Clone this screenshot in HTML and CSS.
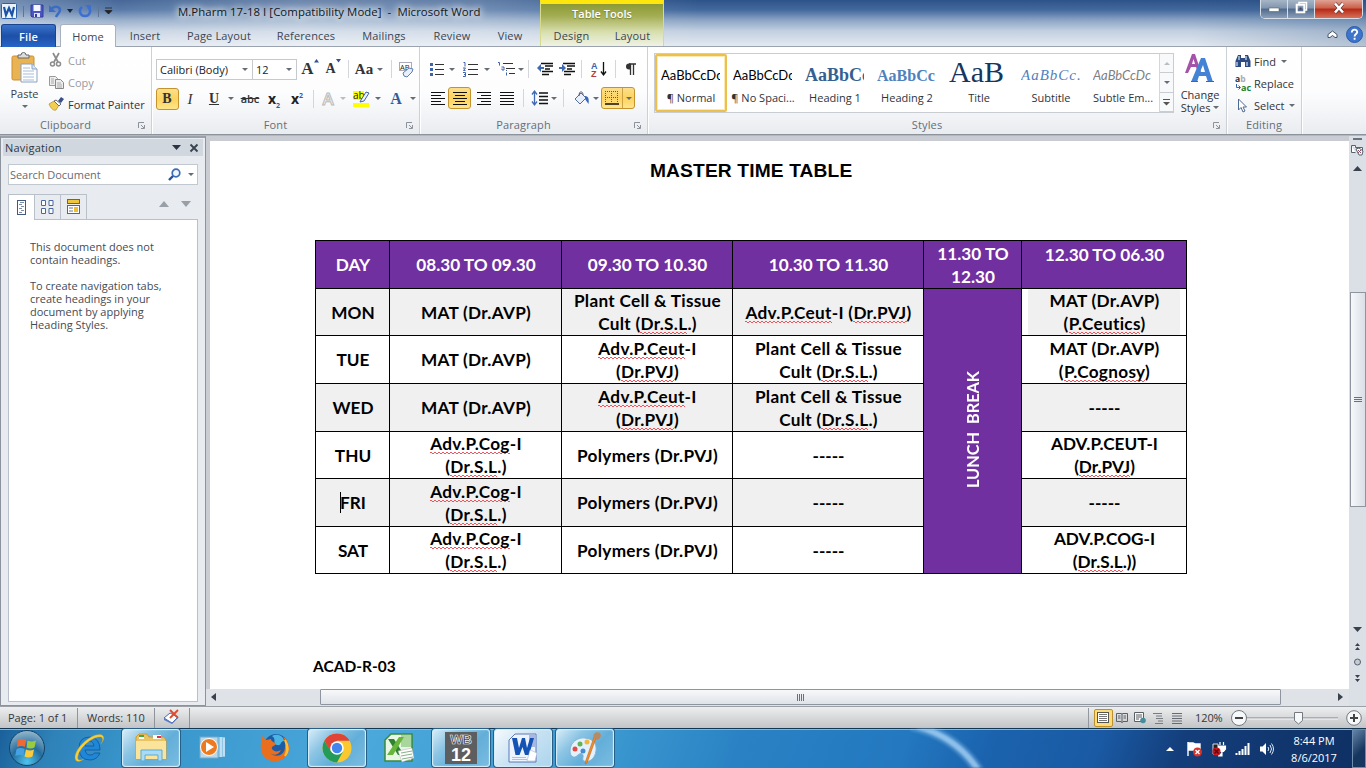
FILE: index.html
```html
<!DOCTYPE html>
<html lang="en">
<head>
<meta charset="utf-8">
<title>M.Pharm 17-18 I [Compatibility Mode] - Microsoft Word</title>
<link rel="stylesheet" href="styles.css">
</head>
<body>
<div class="screen">
  <header class="top">
    <div class="top-left">
      <div class="titlebar">
        <div class="quick">
          <svg width="16" height="18" viewBox="0 0 16 18"><rect x=".5" y="1.500" width="15" height="15" rx="1" fill="#eaf2fc" stroke="#2d5fa8"/><path d="M3 5l2 8 3-7 3 7 2-8" fill="none" stroke="#1b53a6" stroke-width="2.200"/></svg>
          <i class="qsep"></i>
          <svg width="14" height="14" viewBox="0 0 14 14"><path d="M1 1h12v12H2l-1-1z" fill="#4a55c4" stroke="#353d9c"/><rect x="3.500" y="1" width="7" height="6" fill="#f5f7ff"/><rect x="4" y="9" width="6" height="4" fill="#dfe3f5"/><rect x="5" y="10" width="2" height="3" fill="#353d9c"/></svg>
          <svg width="13" height="14" viewBox="0 0 13 14"><path d="M2 5c4-4 9-2 9 1 0 3-3 4-4 7" fill="none" stroke="#3d6cc4" stroke-width="2.500"/><path d="M0 1v7h7z" fill="#3d6cc4"/></svg>
          <i class="arr dark"></i>
          <svg width="14" height="14" viewBox="0 0 14 14"><path d="M4 3C0 6 2 12 7 12s7-6 3-9" fill="none" stroke="#3d6fd0" stroke-width="2.500"/><path d="M7 1h6v6z" fill="#3d6fd0"/></svg>
          <i class="qsep"></i>
          <svg width="7" height="8" viewBox="0 0 7 8"><path d="M0 1h7M0 3.500h7L3.500 7z" stroke="#222" fill="#222" stroke-width=".8"/></svg>
        </div>
        <div class="title">M.Pharm 17-18 I [Compatibility Mode]&nbsp; -&nbsp; Microsoft Word</div>
      </div>
      <nav class="tabs">
        <span class="tab file">File</span><span class="tab home">Home</span><span class="tab">Insert</span><span class="tab">Page Layout</span><span class="tab">References</span><span class="tab">Mailings</span><span class="tab">Review</span><span class="tab">View</span>
      </nav>
    </div>
    <div class="context">
      <div class="context-title">Table Tools</div>
      <div class="context-tabs"><span class="tab">Design</span><span class="tab">Layout</span></div>
    </div>
    <div class="top-right">
      <div class="winbtns">
        <span class="wb min"><svg width="12" height="12" viewBox="0 0 12 12"><rect x="1" y="6" width="10" height="3.500" fill="#fff" stroke="#566" stroke-width=".6"/></svg></span>
        <span class="wb max"><svg width="13" height="13" viewBox="0 0 13 13"><path d="M4 3V1.500h7.500V9H10" fill="none" stroke="#fff" stroke-width="1.500"/><rect x="1.700" y="3.700" width="7.600" height="7.600" fill="none" stroke="#fff" stroke-width="2"/><rect x="4.500" y="6.500" width="2" height="2" fill="#445"/></svg></span>
        <span class="wb close"><svg width="12" height="12" viewBox="0 0 12 12"><path d="M2 1.500l8 9M10 1.500l-8 9" stroke="#5b2e2e" stroke-width="3.600"/><path d="M2 1.500l8 9M10 1.500l-8 9" stroke="#fff" stroke-width="2.600"/></svg></span>
      </div>
      <div class="helpers">
        <svg width="11" height="9" viewBox="0 0 11 9"><path d="M1 4.500L5.500 1 10 4.500v3H8L5.500 5.500 3 7.500H1z" fill="#fff" stroke="#445469"/></svg>
        <svg width="17" height="17" viewBox="0 0 17 17"><circle cx="8.500" cy="8.500" r="8" fill="#3e74cb" stroke="#2b5bab"/><path d="M5.800 6.500c0-4 5.800-3.500 5.400-.3C11 8 8.600 8 8.600 10.400M8.600 11.700v2" fill="none" stroke="#fff" stroke-width="1.900"/></svg>
      </div>
    </div>
  </header>

  <section class="ribbon">
    <div class="group clip">
      <div class="body clip-body">
        <div class="paste">
          <svg width="27" height="31" viewBox="0 0 27 31"><rect x="1" y="4" width="22" height="24" rx="1.500" fill="#e9b252" stroke="#c98f34"/><path d="M7 6V3h3a2.500 2.500 0 0 1 5 0h3v3z" fill="#ddd" stroke="#666"/><path d="M10 12h11l5 5v13H10z" fill="#fdfeff" stroke="#8aa0bf"/><path d="M21 12v5h5" fill="#dce6f3" stroke="#8aa0bf"/><path d="M12 16h7M12 19h11M12 22h11M12 25h11M12 28h11" stroke="#a9bcd8"/></svg>
          <span>Paste</span><i class="arr"></i>
        </div>
        <div class="clip-list">
          <div class="cmd off"><svg width="15" height="14" viewBox="0 0 15 14"><path d="M4 0l5 9M10 0L5 9" stroke="#8c8c8c" stroke-width="1.700"/><circle cx="3.500" cy="11" r="2" fill="none" stroke="#8c8c8c" stroke-width="1.500"/><circle cx="9.500" cy="11" r="2" fill="none" stroke="#8c8c8c" stroke-width="1.500"/></svg><span>Cut</span></div>
          <div class="cmd off"><svg width="15" height="13" viewBox="0 0 15 13"><path d="M.5.5h6l2 2v7h-8z" fill="#eee" stroke="#999"/><path d="M6.500 3.500h5l3 3v6h-8z" fill="#eee" stroke="#888"/><path d="M2 3h3M2 5h3M2 7h3M8 7h4M8 9h5M8 11h5" stroke="#aaa"/></svg><span>Copy</span></div>
          <div class="cmd"><svg width="15" height="14" viewBox="0 0 15 14"><path d="M0 7l5-3 5 4-3 5c-2 1-5-1-7-6z" fill="#f1ce4f" stroke="#b08a24" stroke-width=".7"/><path d="M5 4l2-1 5 4-2 2z" fill="#fff" stroke="#667"/><path d="M9 4l3-4 3 2-3 4z" fill="#3b4f87"/></svg><span>Format Painter</span></div>
        </div>
      </div>
      <div class="label"><span>Clipboard</span><svg class="launch" viewBox="0 0 7 7"><path d="M.5 6V.5H6M3 3l3 3M6.500 3v3.500H3" fill="none" stroke="#8c929a"/></svg></div>
    </div>

    <div class="group font">
      <div class="body">
        <div class="row font1">
          <span class="combo name"><b>Calibri (Body)</b><i class="arr"></i></span>
          <span class="combo size"><b>12</b><i class="arr"></i></span>
          <span class="serif big">A<svg width="5" height="4" viewBox="0 0 5 4"><path d="M0 3.500L2.500 0 5 3.500z" fill="#2e5394"/></svg></span>
          <span class="serif mid">A<svg width="5" height="4" viewBox="0 0 5 4"><path d="M0 0h5L2.500 3.500z" fill="#2e5394"/></svg></span>
          <i class="sep"></i>
          <span class="serif aa">Aa</span><i class="arr"></i><i class="sep"></i>
          <svg width="17" height="17" viewBox="0 0 17 17"><rect x="1.500" y="1.500" width="12" height="8" fill="#fff" stroke="#aab"/><text x="2" y="8.500" font-size="7.500" class="tiny">AB</text><path d="M5 12l6-5 4 1-1 3-5 5-3-1z" fill="#e9f0fb" stroke="#5c7fb8"/></svg>
        </div>
        <div class="row font2">
          <span class="hot"><b class="serif bold">B</b></span>
          <span class="serif ital">I</span><span class="serif under">U</span><i class="arr"></i>
          <span class="strike">abc</span><span class="x2">x<sub>2</sub></span><span class="x2">x<sup>2</sup></span><i class="sep"></i>
          <span class="ghost">A</span><i class="arr pale"></i>
          <svg width="17" height="18" viewBox="0 0 17 18"><rect x="0" y="1" width="11" height="9" fill="#ff0"/><text x="0" y="9" font-size="10" class="tiny">ab</text><path d="M8 10l5-8 3 1-5 8-4 1z" fill="#eef4ff" stroke="#3d64a7"/><rect x="0" y="13" width="16" height="4" fill="#ff0"/></svg><i class="arr"></i>
          <span class="serif fcolor">A</span><i class="arr"></i>
        </div>
      </div>
      <div class="label"><span>Font</span><svg class="launch" viewBox="0 0 7 7"><path d="M.5 6V.5H6M3 3l3 3M6.500 3v3.500H3" fill="none" stroke="#8c929a"/></svg></div>
    </div>

    <div class="group para">
      <div class="body">
        <div class="row para1">
          <svg width="14" height="14" viewBox="0 0 14 14"><path d="M5 2.500h9M5 7.500h9M5 12.500h9" stroke="#333"/><path d="M0 1h3v3H0zM0 6h3v3H0zM0 11h3v3H0z" fill="#3f63a8"/></svg><i class="arr"></i>
          <svg width="15" height="15" viewBox="0 0 15 15"><path d="M5 2.500h10M5 7.500h10M5 12.500h10" stroke="#333"/><path d="M.5.500H2v4M0 6h2.500L.5 8.500h2M0 10.500h2.500v4H0M1 12.500h1" fill="none" stroke="#3f63a8"/></svg><i class="arr"></i>
          <svg width="17" height="16" viewBox="0 0 17 16"><path d="M5 2.500h10M8 7.500h9M11 12.500h6" stroke="#333"/><path d="M0 1.500h1.500v3M3.500 6H6v3H4V7.500M8.500 11.500v3M8.500 9v1" fill="none" stroke="#3f63a8"/></svg><i class="arr"></i>
          <i class="sep"></i>
          <svg width="16" height="14" viewBox="0 0 16 14"><path d="M4 1.500h12M8 4h8M8 7h5M5 9.500h11M5 12.500h7" stroke="#111" stroke-width="1.500"/><path d="M0 6l4-4v3h3v2H4v3z" fill="#3f68b5"/></svg>
          <svg width="16" height="14" viewBox="0 0 16 14"><path d="M4 1.500h12M8 4h8M8 7h5M5 9.500h11M5 12.500h7" stroke="#111" stroke-width="1.500"/><path d="M7 6L3 2v3H0v2h3v3z" fill="#3f68b5"/></svg>
          <i class="sep"></i>
          <svg width="17" height="16" viewBox="0 0 17 16"><text x="1" y="7.500" font-size="9" class="az-a">A</text><text x="1" y="15.500" font-size="9" class="az-z">Z</text><path d="M13.500 1v12M11 10.500l2.500 3.500 2.500-3.500" fill="none" stroke="#111" stroke-width="1.300"/></svg>
          <i class="sep"></i>
          <svg width="11" height="13" viewBox="0 0 11 13"><path d="M5.500 1v11M8.500 1v11M4 1h7" stroke="#333" stroke-width="1.300"/><path d="M5.500.5H4a3 3 0 0 0 0 6h1.500z" fill="#333"/></svg>
        </div>
        <div class="row para2">
          <svg width="14" height="13" viewBox="0 0 14 13"><path d="M0 .5h14M0 3.500h10M0 6.500h14M0 9.500h10M0 12.500h14" stroke="#111"/></svg>
          <span class="hot"><svg width="14" height="13" viewBox="0 0 14 13"><path d="M0 .5h14M2 3.500h10M0 6.500h14M2 9.500h10M0 12.500h14" stroke="#111"/></svg></span>
          <svg width="14" height="13" viewBox="0 0 14 13"><path d="M0 .5h14M4 3.500h10M0 6.500h14M4 9.500h10M0 12.500h14" stroke="#111"/></svg>
          <svg width="14" height="13" viewBox="0 0 14 13"><path d="M0 .5h14M0 3.500h14M0 6.500h14M0 9.500h14M0 12.500h14" stroke="#111"/></svg>
          <i class="sep"></i>
          <svg width="16" height="16" viewBox="0 0 16 16"><path d="M7 3h9M7 6.500h9M7 10h9M7 13.500h9" stroke="#111" stroke-width="1.300"/><path d="M2.500 2v12M0 4.500L2.500 1 5 4.500M0 11.500L2.500 15 5 11.500" fill="none" stroke="#3f68b5" stroke-width="1.300"/></svg><i class="arr"></i>
          <i class="sep"></i>
          <svg width="16" height="14" viewBox="0 0 16 14"><path d="M1 8l6-6 5 5-6 6z" fill="#e8f0fb" stroke="#556f9d"/><path d="M5 5c0-6 4-5 4-1" fill="none" stroke="#556"/><path d="M11 5c4 0 4 4 3.500 8L11 8z" fill="#3668bd"/></svg><i class="arr"></i>
          <span class="hot split"><svg width="14" height="14" viewBox="0 0 14 14"><path d="M0 .5h13M0 6.500h13M.5 0v12M6.500 0v12M12.500 0v12" stroke="#6b5b2b" stroke-dasharray="1 1"/><path d="M0 13h14" stroke="#111" stroke-width="1.500"/></svg><em></em><i class="arr"></i></span>
        </div>
      </div>
      <div class="label"><span>Paragraph</span><svg class="launch" viewBox="0 0 7 7"><path d="M.5 6V.5H6M3 3l3 3M6.500 3v3.500H3" fill="none" stroke="#8c929a"/></svg></div>
    </div>

    <div class="group styles">
      <div class="body styles-body">
        <div class="gallery">
          <div class="style on"><div class="sample">AaBbCcDc</div><span>¶ Normal</span></div>
          <div class="style"><div class="sample">AaBbCcDc</div><span>¶ No Spaci...</span></div>
          <div class="style"><div class="sample h1">AaBbCc</div><span>Heading 1</span></div>
          <div class="style"><div class="sample h2">AaBbCc</div><span>Heading 2</span></div>
          <div class="style"><div class="sample ti">AaB</div><span>Title</span></div>
          <div class="style"><div class="sample su">AaBbCc.</div><span>Subtitle</span></div>
          <div class="style"><div class="sample se">AaBbCcDc</div><span>Subtle Em...</span></div>
          <div class="gscroll"><span><i class="arr up pale"></i></span><span><i class="arr"></i></span><span><svg width="7" height="7" viewBox="0 0 7 7"><path d="M0 .5h7" stroke="#555"/><path d="M0 3h7L3.500 6.500z" fill="#555"/></svg></span></div>
        </div>
        <div class="change">
          <svg width="30" height="30" viewBox="0 0 30 30"><path d="M1 20L8 1h3l6 18h-3l-2-5H7l-3 6zM8 11h3L9.500 6z" fill="#a453a8"/><path d="M7 29L17 5h4l8 24h-5l-2-6h-7l-2 6zM16 19h5l-2-7z" fill="#4382d4"/><path d="M7 28.500h7M22 28.500h8" stroke="#3568b4"/></svg>
          <span>Change</span><span>Styles <i class="arr"></i></span>
        </div>
      </div>
      <div class="label"><span>Styles</span><svg class="launch" viewBox="0 0 7 7"><path d="M.5 6V.5H6M3 3l3 3M6.500 3v3.500H3" fill="none" stroke="#8c929a"/></svg></div>
    </div>

    <div class="group edit">
      <div class="body edit-body">
        <div class="cmd"><svg width="16" height="14" viewBox="0 0 16 14"><path d="M3 1h3v3h4V1h3l2.500 6v6H10V8H6v5H.5V7z" fill="#2c4a80"/><path d="M2 8v4M12 8v4M4 2v4M11 2v4" stroke="#c4d5f0" stroke-width="1.300"/></svg><span>Find</span><i class="arr"></i></div>
        <div class="cmd"><svg width="16" height="15" viewBox="0 0 16 15"><text x="0" y="6" font-size="8.500" class="abk">a<tspan fill="#aaa">b</tspan></text><text x="6" y="14.500" font-size="9" class="acg">ac</text><path d="M1.500 8v3.500H5M3.500 9.500l2 2-2 2" fill="none" stroke="#3763aa"/></svg><span>Replace</span></div>
        <div class="cmd"><svg width="16" height="15" viewBox="0 0 16 15"><path d="M3.500 1v11l2.500-2.500L8 14l2-1-2-4h3.500z" fill="#fff" stroke="#4e6a94"/></svg><span>Select</span><i class="arr"></i></div>
      </div>
      <div class="label"><span>Editing</span></div>
    </div>
  </section>

  <main class="work">
    <aside class="nav">
      <div class="nav-head"><span>Navigation</span><svg width="9" height="5" viewBox="0 0 9 5"><path d="M0 0h9L4.500 5z" fill="#2a3442"/></svg><svg width="8" height="8" viewBox="0 0 8 8"><path d="M.5.500l7 7M7.500.500l-7 7" stroke="#3a4350" stroke-width="1.900"/></svg></div>
      <div class="search"><span>Search Document</span><svg width="13" height="13" viewBox="0 0 13 13"><circle cx="8" cy="5" r="3.800" fill="#eef6ff" stroke="#3d6cb4" stroke-width="1.700"/><path d="M5 8l-4 4" stroke="#24509b" stroke-width="2.400"/></svg><i class="arr"></i></div>
      <div class="nav-tabs">
        <span class="on"><svg width="9" height="15" viewBox="0 0 9 15"><rect x=".5" y=".5" width="8" height="14" fill="#fff" stroke="#41597e"/><path d="M3 2.500h4M2 4.500h3M4 6.500h3M2 8.500h3M4 10.500h3M2 12.500h3" stroke="#5a7093" stroke-width=".8"/></svg></span>
        <span><svg width="13" height="14" viewBox="0 0 13 14"><path d="M.5.500h4v5h-4zM8 .5h4v5H8zM.5 8.500h4v5h-4zM8 8.500h4v5H8z" fill="#fff" stroke="#48699e"/></svg></span>
        <span><svg width="13" height="15" viewBox="0 0 13 15"><rect x=".5" y=".5" width="12" height="4" fill="#f0c63d" stroke="#5e6670"/><rect x=".5" y="6.500" width="12" height="8" fill="#fff" stroke="#5e6670"/><path d="M2 9h4M2 12h4" stroke="#68788c"/><path d="M7 8h4v5H7z" fill="#efbd2e"/></svg></span>
        <svg class="pv" width="10" height="6" viewBox="0 0 10 6"><path d="M0 6L5 0l5 6z" fill="#999fa6"/></svg>
        <svg class="nx" width="10" height="6" viewBox="0 0 10 6"><path d="M0 0h10L5 6z" fill="#999fa6"/></svg>
      </div>
      <div class="nav-body">
        <p>This document does not<br>contain headings.</p>
        <p>To create navigation tabs,<br>create headings in your<br>document by applying<br>Heading Styles.</p>
      </div>
    </aside>
    <section class="doc">
      <div class="page">
        <h1>MASTER TIME TABLE</h1>
        <div class="table">
          <div class="th">DAY</div><div class="th">08.30 TO 09.30</div><div class="th">09.30 TO 10.30</div><div class="th">10.30 TO 11.30</div><div class="th">11.30 TO<br>12.30</div><div class="th topline">12.30 TO 06.30</div>
          <div class="g">MON</div><div class="g w">MAT (Dr.AVP)</div><div class="g w">Plant Cell &amp; Tissue<br>Cult (<u>Dr.S.L</u>.)</div><div class="g w"><span><u>Adv.P.Ceut</u>-I (<u>Dr.PVJ</u>)</span></div><div class="th lunch"><span>LUNCH&nbsp; BREAK</span></div><div class="inner w">MAT (Dr.AVP)<br>(<u>P.Ceutics</u>)</div>
          <div>TUE</div><div class="w">MAT (Dr.AVP)</div><div class="w"><u>Adv.P.Ceut</u>-I<br>(<u>Dr.PVJ</u>)</div><div class="w">Plant Cell &amp; Tissue<br>Cult (<u>Dr.S.L</u>.)</div><div class="w">MAT (Dr.AVP)<br>(<u>P.Cognosy</u>)</div>
          <div class="g">WED</div><div class="g w">MAT (Dr.AVP)</div><div class="g w"><u>Adv.P.Ceut</u>-I<br>(<u>Dr.PVJ</u>)</div><div class="g w">Plant Cell &amp; Tissue<br>Cult (<u>Dr.S.L</u>.)</div><div class="g">-----</div>
          <div>THU</div><div class="w"><u>Adv.P.Cog</u>-I<br>(<u>Dr.S.L</u>.)</div><div class="w">Polymers (Dr.PVJ)</div><div>-----</div><div>ADV.P.CEUT-I<br>(<u>Dr.PVJ</u>)</div>
          <div class="g"><span class="caret">FRI</span></div><div class="g w"><u>Adv.P.Cog</u>-I<br>(<u>Dr.S.L</u>.)</div><div class="g w">Polymers (Dr.PVJ)</div><div class="g">-----</div><div class="g">-----</div>
          <div>SAT</div><div class="w"><u>Adv.P.Cog</u>-I<br>(<u>Dr.S.L</u>.)</div><div class="w">Polymers (Dr.PVJ)</div><div>-----</div><div>ADV.P.COG-I<br>(<u>Dr.S.L</u>.))</div>
        </div>
        <div class="foot">ACAD-R-03</div>
      </div>
      <div class="hscroll"><svg width="14" height="8" viewBox="0 0 14 8"><path d="M10 0v8L5 4z" fill="#39414c"/></svg><div class="hthumb"><i></i><i></i><i></i><i></i></div><svg class="hr" width="8" height="8" viewBox="0 0 8 8"><path d="M1 0v8l5-4z" fill="#39414c"/></svg></div>
    </section>
    <div class="vscroll">
      <i class="splitbar"></i>
      <svg class="ruler" width="13" height="12" viewBox="0 0 13 12"><path d="M.5 1.500h4v2h7v4M.5 1.500v7h4" fill="#fff" stroke="#566270"/><path d="M5 5l3-1 4 3-1 4H8z" fill="#fff" stroke="#566270"/><path d="M7 6l3 3M10 6L7 9" stroke="#8b5360"/></svg>
      <svg class="vu" width="9" height="5" viewBox="0 0 9 5"><path d="M0 5L4.500 0 9 5z" fill="#39414c"/></svg>
      <div class="vthumb"><i></i><i></i><i></i></div>
      <svg class="vd" width="9" height="5" viewBox="0 0 9 5"><path d="M0 0h9L4.500 5z" fill="#39414c"/></svg>
      <svg class="browse" width="9" height="40" viewBox="0 0 9 40"><path d="M2 4h5L4.500 1zM2 8h5L4.500 5z" fill="#39414c"/><circle cx="4.500" cy="20" r="3" fill="#c5cad1" stroke="#555f6b"/><path d="M2 33h5L4.500 36zM2 37h5L4.500 40z" fill="#39414c"/></svg>
    </div>
  </main>

  <footer class="status">
    <span class="s-page">Page: 1 of 1</span><span class="s-words">Words: 110</span>
    <span class="s-proof"><svg width="17" height="16" viewBox="0 0 17 16"><path d="M1 9l6-5 8 4-6 6z" fill="#fff" stroke="#4b6bb0"/><path d="M1 9v2l8 4 6-6V8l-6 6z" fill="#557bc4"/><path d="M7 1l8 8M15 1L7 9" stroke="#e04a2c" stroke-width="1.800"/></svg></span>
    <span class="grow"></span><i class="s-sep"></i>
    <span class="view-on"><svg width="12" height="11" viewBox="0 0 12 11"><rect x=".5" y=".5" width="11" height="10" fill="#fff" stroke="#555"/><path d="M2 2.500h8M2 4.500h8M2 6.500h8M2 8.500h8" stroke="#777"/></svg></span>
    <svg width="12" height="12" viewBox="0 0 12 12"><path d="M.5 1.500H5L6 2l1-.5h4.500v8H7l-1 1-1-1H.5zM6 2v9M2 4h2.500M2 6h2.500M7.500 4H10M7.500 6H10" fill="none" stroke="#5a5f66"/></svg>
    <svg width="12" height="12" viewBox="0 0 12 12"><path d="M.5.500h9v9h-9zM2 3h6M2 5h6M2 7h3" fill="#f8f8f8" stroke="#5a5f66"/><circle cx="9" cy="8.500" r="2.800" fill="#478c9b"/></svg>
    <svg width="12" height="12" viewBox="0 0 12 12"><path d="M0 1.500h9M3 4h6M3 6.500h7M5 9h5M2 11.500h8" stroke="#777c83"/></svg>
    <svg width="12" height="12" viewBox="0 0 12 12"><path d="M1 1.500h10M1 4h10M1 6.500h10M1 9h10M1 11.500h10" stroke="#666b73"/></svg>
    <span class="zoom">120%</span>
    <svg class="slider" width="116" height="18" viewBox="0 0 116 18"><path d="M16 9h92" stroke="#7f858d"/><path d="M16 10h92" stroke="#f4f5f7"/><circle cx="9" cy="9" r="7.500" fill="#f7f8f9" stroke="#74797f"/><path d="M5 9h8" stroke="#444" stroke-width="2"/><path d="M64.500 3.500h8v8l-4 3.500-4-3.500z" fill="#f7f8f9" stroke="#74797f"/></svg>
    <svg class="plus" width="16" height="16" viewBox="0 0 16 16"><circle cx="8" cy="8" r="7.300" fill="#f7f8f9" stroke="#74797f"/><path d="M4 8h8M8 4v8" stroke="#444" stroke-width="2"/></svg>
  </footer>

  <footer class="taskbar">
    <svg class="swoosh" width="160" height="40" viewBox="0 0 160 40"><path d="M32 -4Q78 6 102 44" fill="none" stroke="#8cc4f0" stroke-width="12" opacity=".3"/><path d="M32 -4Q78 6 102 44" fill="none" stroke="#a9d4f7" stroke-width="6" opacity=".75"/></svg>
    <div class="orb"><svg width="38" height="38" viewBox="0 0 38 38"><defs><radialGradient id="orb" cx=".5" cy=".9" r=".9"><stop offset="0" stop-color="#4ec4f0"/><stop offset=".5" stop-color="#246c9c"/><stop offset="1" stop-color="#97b9cf"/></radialGradient></defs><circle cx="19" cy="19" r="17.500" fill="url(#orb)" stroke="#134263"/><path d="M10 11q4-2 8 0l-1 7q-4-2-8 0z" fill="#ee6a35"/><path d="M19.500 11.500q4 2 8.500 0l-1.500 7q-4 2-8 0z" fill="#9acb3c"/><path d="M8.500 20q4-2 8 0l-1.200 7q-4-2-8 0z" fill="#45a2e2"/><path d="M18 20.500q4 2 8 0l-1.500 7q-4 2-8 0z" fill="#fccb3d"/></svg></div>
    <div class="apps">
      <span class="app"><svg width="32" height="32" viewBox="0 0 32 32"><path d="M27 18H12q1 5 5 5 3 0 4.500-2H27q-3 7-10 7Q6 28 6 16 6 5 17 5q10 1 10 13zM12 14h9q-1-5-4.500-5T12 14z" fill="#1f86d8" stroke="#10579d" stroke-width=".8"/><path d="M29 3C20 0 2 15 2 26c1 6 6 3 9 1-5 2-7 1-6-3C7 15 20 4 28 5c3 1 1 5 0 7 3-4 4-7 1-9z" fill="#f6cf3c" stroke="#bd922a" stroke-width=".4"/></svg></span>
      <span class="app run"><svg width="32" height="30" viewBox="0 0 32 30"><path d="M1 4l3-3h8l2 3h15l2 3v19H1z" fill="#eac364" stroke="#c99b36"/><path d="M4 2h5v4H4zM18 2h8v4h-8z" fill="#fffdf0"/><path d="M4 2h5v2H4z" fill="#41a847"/><path d="M22 3h4v2h-4z" fill="#d34"/><path d="M1 8h30v18H1z" fill="#fae39a"/><path d="M6 28V17h21v11h-4v-6H10v6z" fill="#a9dbf4" stroke="#5aa9d5"/></svg></span>
      <span class="app"><svg width="28" height="26" viewBox="0 0 28 26"><path d="M16 2h10v20H16z" fill="#8fc6e6"/><path d="M22 2v20M25 3v18" stroke="#eef8ff"/><rect x="1" y="2" width="18" height="21" fill="#b9d8ea" stroke="#73aacb"/><circle cx="10" cy="12" r="8.500" fill="#ee7a20" stroke="#fff"/><path d="M7 7v10l8-5z" fill="#fff"/></svg></span>
      <span class="app"><svg width="32" height="32" viewBox="0 0 32 32"><circle cx="17" cy="14" r="12" fill="#1d5ca5"/><path d="M13 4c5-3 12 0 12 5-4 0-2 5-7 4s0-6-5-9z" fill="#4cb4e2"/><path d="M3 4l4 4 5-1c0 3 4 3 5 5-1 2-5 2-4 5 2 3 6 3 9 1-2 5-8 6-11 3 5 5 15 3 15-6 1-4 0-7-2-10 6 3 8 12 4 18C20 34 3 30 2 17 1 12 3 10 3 4z" fill="#e96f1e"/><path d="M26 8c3 5 4 11 0 16 3-5 2-11 0-16z" fill="#ffd03f" stroke="#ffbf34" stroke-width="2"/></svg></span>
      <span class="app run"><svg width="30" height="30" viewBox="0 0 30 30"><circle cx="15" cy="15" r="14.500" fill="#fbc92f"/><path d="M15 15l-6 3L2.400 7.800A14.500 14.500 0 0 0 15 29.500l6-11z" fill="#249c59"/><path d="M2.400 7.800A14.500 14.500 0 0 1 27.700 7.800H15L8 17z" fill="#df4437"/><circle cx="15" cy="15" r="6.800" fill="#fff"/><circle cx="15" cy="15" r="5.200" fill="#4285ed"/></svg></span>
      <span class="app"><svg width="30" height="30" viewBox="0 0 30 30"><path d="M7 1h21v27H1V7z" fill="#e9f6e6" stroke="#368b3c" stroke-width="1.500"/><path d="M17 2h10v12H17z" fill="#a8d69c"/><path d="M4 6h6l10 16h-6z" fill="#2c842f"/><path d="M20 4h-5L3 22h6z" fill="#68b53c"/><path d="M14 18l14-3 2 10-12 4z" fill="#fff" stroke="#aaa" stroke-width=".5"/><path d="M17 20l11-2M17 23l11-2M18 26l11-2" stroke="#88b389"/></svg></span>
      <span class="app run"><span class="wbtile"><b>WB</b><strong>12</strong></span></span>
      <span class="app run word"><svg width="30" height="30" viewBox="0 0 30 30"><path d="M7 1h21v28H1V7z" fill="#eef4fe" stroke="#5f78b6"/><path d="M21 2h6v12h-6z" fill="#a7b8e4"/><path d="M4 5h5l2 10 3-10h3l2 10 3-10h4l-5 17h-4l-2.500-8-3 8h-4z" fill="#1452b4"/><path d="M22 17l7 3-2 8h-8z" fill="#fff" stroke="#9aa8cb" stroke-width=".5"/><path d="M4 24.500h14M4 26.500h15" stroke="#b3bfde"/></svg></span>
      <span class="app run"><svg width="32" height="34" viewBox="0 0 32 34"><path d="M1 20C1 11 9 6 16 7c8 1 12 5 11 13-1 7-6 12-12 10-3-2 1-5-2-7s-5 4-9 3c-2-1-3-3-3-6z" fill="#e2f1fb" stroke="#83b5d6"/><circle cx="6" cy="18" r="2.500" fill="#e24b45"/><circle cx="11" cy="13" r="2.500" fill="#62b355"/><circle cx="18" cy="11" r="2.500" fill="#f4b63a"/><circle cx="14" cy="20" r="2.500" fill="#458cd1"/><path d="M27 7l-9 25-2 1 1-4 8-23z" fill="#ee8d2e" stroke="#c3681d" stroke-width=".6"/><path d="M25 7c-2-4 2-7 6-5 2 3 0 6-3 7z" fill="#b88a63"/></svg></span>
    </div>
    <div class="tray">
      <svg width="8" height="4" viewBox="0 0 8 4"><path d="M0 4l4-4 4 4z" fill="#fff"/></svg>
      <svg width="17" height="16" viewBox="0 0 17 16"><path d="M2 1v14M3 2h4l2 1h5v7H9L7 9H3z" fill="#fff" stroke="#fff" stroke-width="1.400"/><circle cx="11.500" cy="11" r="4.500" fill="#d6342b"/><path d="M9.500 9l4 4M13.500 9l-4 4" stroke="#fff" stroke-width="1.400"/></svg>
      <svg width="14" height="16" viewBox="0 0 14 16"><path d="M1 3h5v10H1z" fill="#222" stroke="#ddd"/><path d="M8 1v3M11.500 1v3M6.500 5h7v3l-2 2.500h-3L6.500 8zM10 11v4H6" fill="#fff" stroke="#fff" stroke-width="1.200"/><circle cx="4.500" cy="10.500" r="4" fill="#c91818"/><path d="M2.500 8.500l4 4M6.500 8.500l-4 4" stroke="#501" stroke-width="1.200"/></svg>
      <svg width="15" height="12" viewBox="0 0 15 12"><path d="M1.500 12v-2M4.500 12V8M7.500 12V6M10.500 12V3M13.500 12V0" stroke="#fff" stroke-width="2"/></svg>
      <svg width="15" height="14" viewBox="0 0 15 14"><path d="M1 4.500h2.500L7 1v12L3.500 9.500H1z" fill="#fff"/><path d="M9 5q1.500 2 0 4M11 3q3 4 0 8M12.500 1.500q4 5.500 0 11" fill="none" stroke="#dce9f6"/></svg>
      <div class="clock"><span>8:44 PM</span><span>8/6/2017</span></div>
      <i class="peek"></i>
    </div>
  </footer>
</div>
</body>
</html>
```
FILE: styles.css
```css
* { box-sizing: border-box; }
body { margin: 0; font-family: "Open Sans", "Noto Sans", sans-serif; font-size: 11px; color: #3b3f45; }
svg { display: block; flex: none; overflow: visible; }
i, em { font-style: normal; flex: none; }
.screen { width: 1366px; height: 768px; display: flex; flex-direction: column; overflow: hidden; background: #c9cdd2; white-space: nowrap; }

/* title bar and tabs */
.top { height: 47px; display: flex; background: linear-gradient(90deg, rgba(255,255,255,.35) 0, rgba(255,255,255,.12) 120px, rgba(255,255,255,.3) 300px, rgba(255,255,255,.25) 480px, rgba(255,255,255,0) 700px), linear-gradient(#2d5389 0, #43699d 10px, #8ba4c4 20px, #c3d0e1 31px, #e3e9f0 46px); border-bottom: 1px solid #9aa3af; }
.top-left { width: 540px; }
.titlebar { height: 24px; display: flex; align-items: center; }
.quick { width: 178px; display: flex; align-items: center; gap: 5px; padding: 0 0 2px 1px; height: 24px; }
.qsep { width: 1px; height: 11px; background: #5e7597; margin: 0 1px; }
.title { font-size: 11.4px; letter-spacing: .06px; padding-bottom: 2px; color: #101722; text-shadow: 0 0 6px #fff, 0 0 9px #fff, 0 0 12px rgba(255,255,255,.8); }
.tabs { height: 23px; display: grid; grid-template-columns: 56px 60px 58px 90px 84px 72px 64px 52px; }
.tab { display: flex; align-items: center; justify-content: center; height: 23px; letter-spacing: .15px; color: #3d4552; }
.tab.file { margin: 0 0 0 1px; background: linear-gradient(#3a74cb, #1d4fa7 50%, #2766c8); border: 1px solid #1b4490; border-bottom: 0; border-radius: 3px 3px 0 0; color: #fff; font-weight: 600; }
.tab.home { margin: 0 0 0 4px; background: #fff; border: 1px solid #a8b1bd; border-bottom: 0; border-radius: 3px 3px 0 0; height: 24px; z-index: 1; }
.context { width: 124px; border-top: 4px solid #ffe60c; background: linear-gradient(#8d9a36 0, #a3ad52 12px, #d8dfae 28px, #f1f4e8 43px); border-left: 1px solid #d5da8c; border-right: 1px solid #d5da8c; }
.context-title { height: 20px; line-height: 20px; text-align: center; color: #fff; font-weight: 600; text-shadow: 0 1px 1px #777d3a; }
.context-tabs { display: grid; grid-template-columns: 1fr 1fr; }
.top-right { width: 702px; display: flex; flex-direction: column; align-items: flex-end; background: linear-gradient(100deg, transparent 75%, rgba(40,80,130,.25) 100%); }
.winbtns { height: 19px; margin-right: 3px; display: flex; border: 1px solid #d6dee8; border-top: 0; border-radius: 0 0 5px 5px; overflow: hidden; }
.wb { width: 27px; display: flex; align-items: center; justify-content: center; background: linear-gradient(#a7b5c6 0, #8095af 45%, #506a8c 50%, #8b9fb8); border-right: 1px solid #d6dee8; }
.wb svg { margin-top: -2px; }
.wb.close { width: 47px; border: 0; background: linear-gradient(#dfa294 0, #cc5f4a 45%, #b32a15 50%, #d8705a); }
.helpers { display: flex; align-items: center; gap: 14px; height: 28px; padding: 5px 3px 0 0; }
.helpers svg:first-child { margin-right: -6px; }

/* ribbon */
.ribbon { height: 88px; display: flex; background: linear-gradient(#fff 0, #fdfdfe 45px, #e9ecf0 86px); border-bottom: 1px solid #8d939b; box-shadow: 0 1px 0 #b4b8be; z-index: 1; }
.group { height: 87px; border-right: 1px solid #ccd1d7; box-shadow: 1px 0 #fff; }
.clip { width: 152px; } .font { width: 268px; } .para { width: 228px; } .styles { width: 579px; } .edit { width: 75px; }
.body { height: 69px; }
.label { height: 17px; display: flex; align-items: center; justify-content: center; position: relative; color: #676e78; letter-spacing: .15px; }
.clip .label, .font .label, .para .label, .styles .label { padding-right: 20px; }
.launch { position: absolute; right: 6px; bottom: 4px; width: 7px; height: 7px; }
.arr { width: 0; height: 0; border: 3px solid transparent; border-top-color: #666c74; border-bottom: 0; display: inline-block; justify-self: center; }
.arr.dark { border-top-color: #1d2735; border-width: 4px 3px 0; }
.arr.pale { border-top-color: #b9bdc2; }
.arr.up { transform: rotate(180deg); }
.sep { width: 1px; height: 18px; background: #d3d6da; justify-self: center; }
.clip-body { display: flex; }
.paste { width: 49px; padding-top: 5px; display: flex; flex-direction: column; align-items: center; }
.paste span { margin-top: 3px; }
.paste .arr { margin-top: 4px; }
.clip-list { padding-top: 2px; }
.cmd { height: 22px; display: flex; align-items: center; gap: 4px; color: #30343a; }
.cmd.off { color: #979ba0; }
.row { display: grid; align-items: center; justify-items: center; height: 22px; }
.serif { font-family: "Liberation Serif", serif; font-weight: bold; color: #333; line-height: 20px; }
.font .body { padding: 11px 0 0 4px; }
.font1 { grid-template-columns: 97px 44px 26px 20px 10px 22px 10px 13px 17px; margin-bottom: 7px; }
.combo { width: 97px; height: 21px; border: 1px solid #c6cacf; display: flex; align-items: center; justify-content: space-between; padding: 0 4px 0 3px; background: #fff; color: #222; }
.combo b { font-weight: 400; }
.combo.size { width: 44px; border-left: 0; }
.serif.big, .serif.mid { display: flex; }
.serif.big { font-size: 17px; } .serif.mid { font-size: 14px; } .serif.aa { font-size: 15px; }
.font2 { grid-template-columns: 22px 24px 24px 10px 28px 20px 26px 6px 24px 6px 30px 4px 32px 2px; }
.hot { height: 22px; width: 23px; display: flex; align-items: center; justify-content: center; background: linear-gradient(#fcdf8d, #fdd35e 50%, #ffe58a); border: 1px solid #c4932f; border-radius: 3px; }
.bold { font-size: 14px; } .ital { font-size: 15px; font-style: italic; font-weight: 400; } .under { font-size: 14px; text-decoration: underline; }
.strike { font-weight: 600; font-size: 11px; text-decoration: line-through; color: #333; }
.x2 { font-size: 14px; font-weight: 700; line-height: 14px; color: #222; } .x2 sub, .x2 sup { font-size: 7px; color: #31599e; line-height: 0; }
.ghost { font-size: 17px; font-weight: 600; color: #f4f4f4; -webkit-text-stroke: 1px #bbb; }
.fcolor { font-size: 16px; color: #355b99; }
.tiny { font-family: "Open Sans", sans-serif; fill: #222; }
.az-a, .az-z { font-family: "Liberation Sans", sans-serif; font-weight: bold; fill: #3b61a8; } .az-z { fill: #b13a46; }
.para .body { padding: 11px 0 0 8px; }
.para1 { grid-template-columns: 18px 12px 24px 10px 29px 0px 15px 18px 26px 3px 30px 4px 27px; margin-bottom: 7px; }
.para2 { grid-template-columns: 19px 25px 23px 23px 10px 23px 5px 15px 21px 8px 36px; }
.hot.split { width: 34px; gap: 3px; } .split em { width: 1px; height: 20px; background: #cda244; }
.styles-body { display: flex; padding: 6px 0 0 6px; }
.gallery { width: 520px; height: 60px; display: grid; grid-template-columns: repeat(7, 72px) 14px; border: 1px solid #c9cdd2; background: #fff; overflow: hidden; }
.style { height: 58px; text-align: center; overflow: hidden; padding: 0 6px; color: #30343a; }
.style span { display: block; line-height: 16px; margin: 0 -6px; }
.style.on { border: 2px solid #ecc04d; box-shadow: inset 0 0 0 1px #fbe9b5; border-radius: 2px; padding: 0 4px; }
.sample { height: 28px; margin-top: 8px; font: 13px/27px Lato, sans-serif; text-align: left; overflow: hidden; color: #000; width: 59px; }
.style.on .sample { margin-top: 6px; }
.sample.h1 { font: bold 18px/27px "Liberation Serif", serif; color: #365f91; }
.sample.h2 { font: bold 16px/27px "Liberation Serif", serif; color: #4f81bd; }
.sample.ti { font: 30px/19px "Liberation Serif", serif; color: #17365d; }
.sample.su { font: italic 15px/27px "Liberation Serif", serif; color: #4f81bd; letter-spacing: 1px; }
.sample.se { font: italic 13px/27px Lato, sans-serif; color: #808080; }
.gscroll { display: grid; grid-template-rows: 19px 20px 19px; background: #f8f9fa; border-left: 1px solid #d3d6da; }
.gscroll span { display: flex; align-items: center; justify-content: center; border-bottom: 1px solid #c9cdd2; }
.change { width: 52px; display: flex; flex-direction: column; align-items: center; line-height: 13px; color: #30343a; }
.change svg { margin-bottom: 5px; margin-right: 2px; }
.change .arr { vertical-align: 3px; }
.edit-body { padding: 3px 0 0 8px; }
.edit-body .cmd { gap: 3px; }
.edit-body .cmd .arr { margin-left: 2px; }
.abk, .acg { font-family: "Open Sans", sans-serif; font-weight: bold; fill: #333; } .acg { fill: #22832c; }

/* work area */
.work { height: 571px; display: flex; }
.nav { width: 206px; border: 1px solid #8c939d; border-width: 3px 1px 1px; border-top-color: #9ba1aa; background: #e8ebf0; padding: 1px 2px 3px; }
.nav-head { height: 17px; display: flex; align-items: center; background: #d1d7df; padding: 0 5px 0 2px; color: #2f3844; letter-spacing: .2px; }
.nav-head span { flex: 1; } .nav-head svg { margin-left: 9px; }
.search { height: 21px; margin: 8px 5px 9px; border: 1px solid #c2c8d0; background: #fff; display: flex; align-items: center; padding: 0 3px 0 1px; color: #666c74; letter-spacing: -.05px; }
.search span { flex: 1; } .search .arr { margin-left: 7px; }
.nav-tabs { height: 26px; margin: 0 5px; display: flex; align-items: center; border-bottom: 1px solid #b9c0c9; }
.nav-tabs span { width: 26px; height: 26px; border: 1px solid #b9c0c9; border-left: 0; display: flex; align-items: center; justify-content: center; }
.nav-tabs span.on { background: #fff; border-left: 1px solid #b9c0c9; border-bottom: 0; width: 27px; }
.pv { margin: -6px 12px 0 72px; } .nx { margin-top: -6px; }
.nav-body { height: 482px; margin: 0 5px; padding: 20px 0 0 21px; background: #fff; border: 1px solid #b9c0c9; border-top: 0; line-height: 13px; color: #454b55; letter-spacing: 0; }
.nav-body p { margin: 0 0 13px; }
.doc { width: 1143px; padding: 6px 0 0 4px; background: #c9ccd2; }
.page { height: 548px; background: #fff; overflow: hidden; color: #000; font-family: Lato, "Liberation Sans", sans-serif; font-weight: 700; }
.page h1 { margin: 19px 0 0 440px; font: bold 19.2px/22px "Liberation Sans", sans-serif; letter-spacing: .14px; }
.table { width: 872px; margin: 58px 0 0 105px; padding: 1px; background: #000; display: grid; gap: 1px; grid-template-columns: 73px 171px 170px 190px 97px 164px; grid-template-rows: 47px 46px 47px 47px 46px 47px 46px; font-size: 17.2px; line-height: 23px; text-align: center; }
.table > div { background: #fff; display: block; align-content: center; padding-left: 1px; }
.table > .w { letter-spacing: .3px; }
.table > .g { background: #f0f0f0; }
.table > .th { background: #7030a0; color: #fff; }
.table > .topline { align-content: start; padding-top: 2px; }
.table > .lunch { grid-row: 2 / 8; grid-column: 5; display: flex; align-items: center; justify-content: center; font-size: 16.3px; padding: 0 0 2px; }
.lunch span { writing-mode: vertical-rl; transform: rotate(180deg); }
.table > .inner { background: linear-gradient(#f0f0f0, #f0f0f0) 6px 0 / 152px 100% no-repeat #fff; }
u { text-decoration: none; background: repeating-linear-gradient(90deg, #f0545c 0 2px, transparent 2px 4px) 0 calc(100% - 1px) / 100% 1px no-repeat, repeating-linear-gradient(90deg, transparent 0 2px, #f0545c 2px 4px) 0 100% / 100% 1px no-repeat; }
.caret { box-shadow: inset 1px 0 #000; }
.foot { margin: 81px 0 0 103px; font-size: 15.5px; line-height: 22px; }
.hscroll { height: 17px; margin-left: -4px; display: flex; align-items: flex-start; background: #dfe2e7; }
.hscroll > svg { margin-top: 4px; }
.hthumb { width: 961px; height: 16px; margin-left: 100px; border: 1px solid #8e959f; border-radius: 1px; background: linear-gradient(#f7f8fa, #dfe3e8); display: flex; align-items: center; justify-content: center; gap: 1px; }
.hthumb i { width: 1px; height: 7px; background: #6a717b; }
.hscroll > .hr { margin-left: 56px; }
.vscroll { width: 17px; background: #dbe0e7; display: flex; flex-direction: column; align-items: center; }
.splitbar { width: 9px; height: 2px; margin-top: 3px; background: #6b7480; }
.ruler { margin-top: 4px; } .vu { margin-top: 10px; margin-bottom: 123px; }
.vthumb { width: 16px; height: 215px; margin-top: -2px; border: 1px solid #8e959f; background: linear-gradient(90deg, #f7f8fa, #dadfe6); display: flex; flex-direction: column; align-items: center; justify-content: center; gap: 1px; }
.vthumb i { width: 8px; height: 1px; background: #6a717b; }
.vd { margin-top: 120px; } .browse { margin-top: 10px; }

/* status bar */
.status { height: 22px; border-top: 1px solid #9ba0a7; background: linear-gradient(#eceef0, #c2c4c7); display: flex; align-items: center; color: #33373d; }
.s-page, .s-words, .s-proof { height: 20px; display: flex; align-items: center; border-right: 1px solid #8f949a; padding-bottom: 1px; }
.s-page { width: 78px; padding-left: 8px; } .s-words { width: 77px; padding-left: 9px; } .s-proof { width: 35px; padding-left: 8px; }
.grow { flex: 1; } .s-sep { width: 1px; height: 20px; background: #93989f; margin-right: 5px; }
.view-on { width: 19px; height: 18px; display: flex; align-items: center; justify-content: center; border: 1px solid #bd902c; border-radius: 2px; background: #fddb76; margin-right: -3px; }
.status > svg { margin-left: 6.3px; }
.status .zoom { margin-left: 12px; width: 29px; letter-spacing: -.1px; }
.status > .slider { width: 116px; margin-left: 6px; } .status > .plus { margin: 0 4px 0 0; }

/* taskbar */
.taskbar { height: 40px; border-top: 1px solid #123752; box-shadow: inset 0 1px #80b9dc; position: relative; display: flex; background: linear-gradient(110deg, #1a609b 0, #2e82b8 4%, #3895cb 10%, #4aa8db 27%, #3c99d0 44%, #2a82c4 54%, #2378bf 66%, #1b63ae 72%, #1a5aa4 80%, #143e7b 86%, #0e2f62 100%); }
.swoosh { position: absolute; left: 878px; top: 0; height: 39px; overflow: hidden; filter: blur(1px); }
.orb { width: 60px; padding-left: 8px; }
.apps { display: flex; gap: 4px; }
.app { width: 58px; height: 38px; display: flex; align-items: center; justify-content: center; }
.app.run { border: 1px solid #d4ecfa; box-shadow: inset 0 0 1px #fff, 0 0 0 1px #285f86; border-radius: 3px; background: linear-gradient(135deg, #d5ebf7 0, #8cc5e4 30%, #63aed9 60%, #7abce0); }
.app.word { background: linear-gradient(135deg, #f5fafd 0, #c8e2f2 50%, #acd5ed); }
.wbtile { width: 32px; height: 32px; background: #5d5e5f; font-family: "Liberation Sans", sans-serif; display: flex; flex-direction: column; align-items: center; overflow: hidden; }
.wbtile b { font-size: 13px; line-height: 15px; height: 15px; color: #333; -webkit-text-stroke: .7px #eee; }
.wbtile strong { font-size: 18px; line-height: 17px; height: 17px; color: #fff; }
.tray { position: relative; margin-left: auto; display: flex; align-items: center; gap: 9px; }
.tray > svg:first-child { margin-right: 3px; }
.clock { color: #fff; width: 70px; display: flex; flex-direction: column; align-items: center; line-height: 17px; margin-left: -4px; }
.peek { width: 14px; height: 39px; margin-left: -6px; border: 1px solid #6d8cae; background: linear-gradient(135deg, #6484a8, #17365f 60%); }
```
